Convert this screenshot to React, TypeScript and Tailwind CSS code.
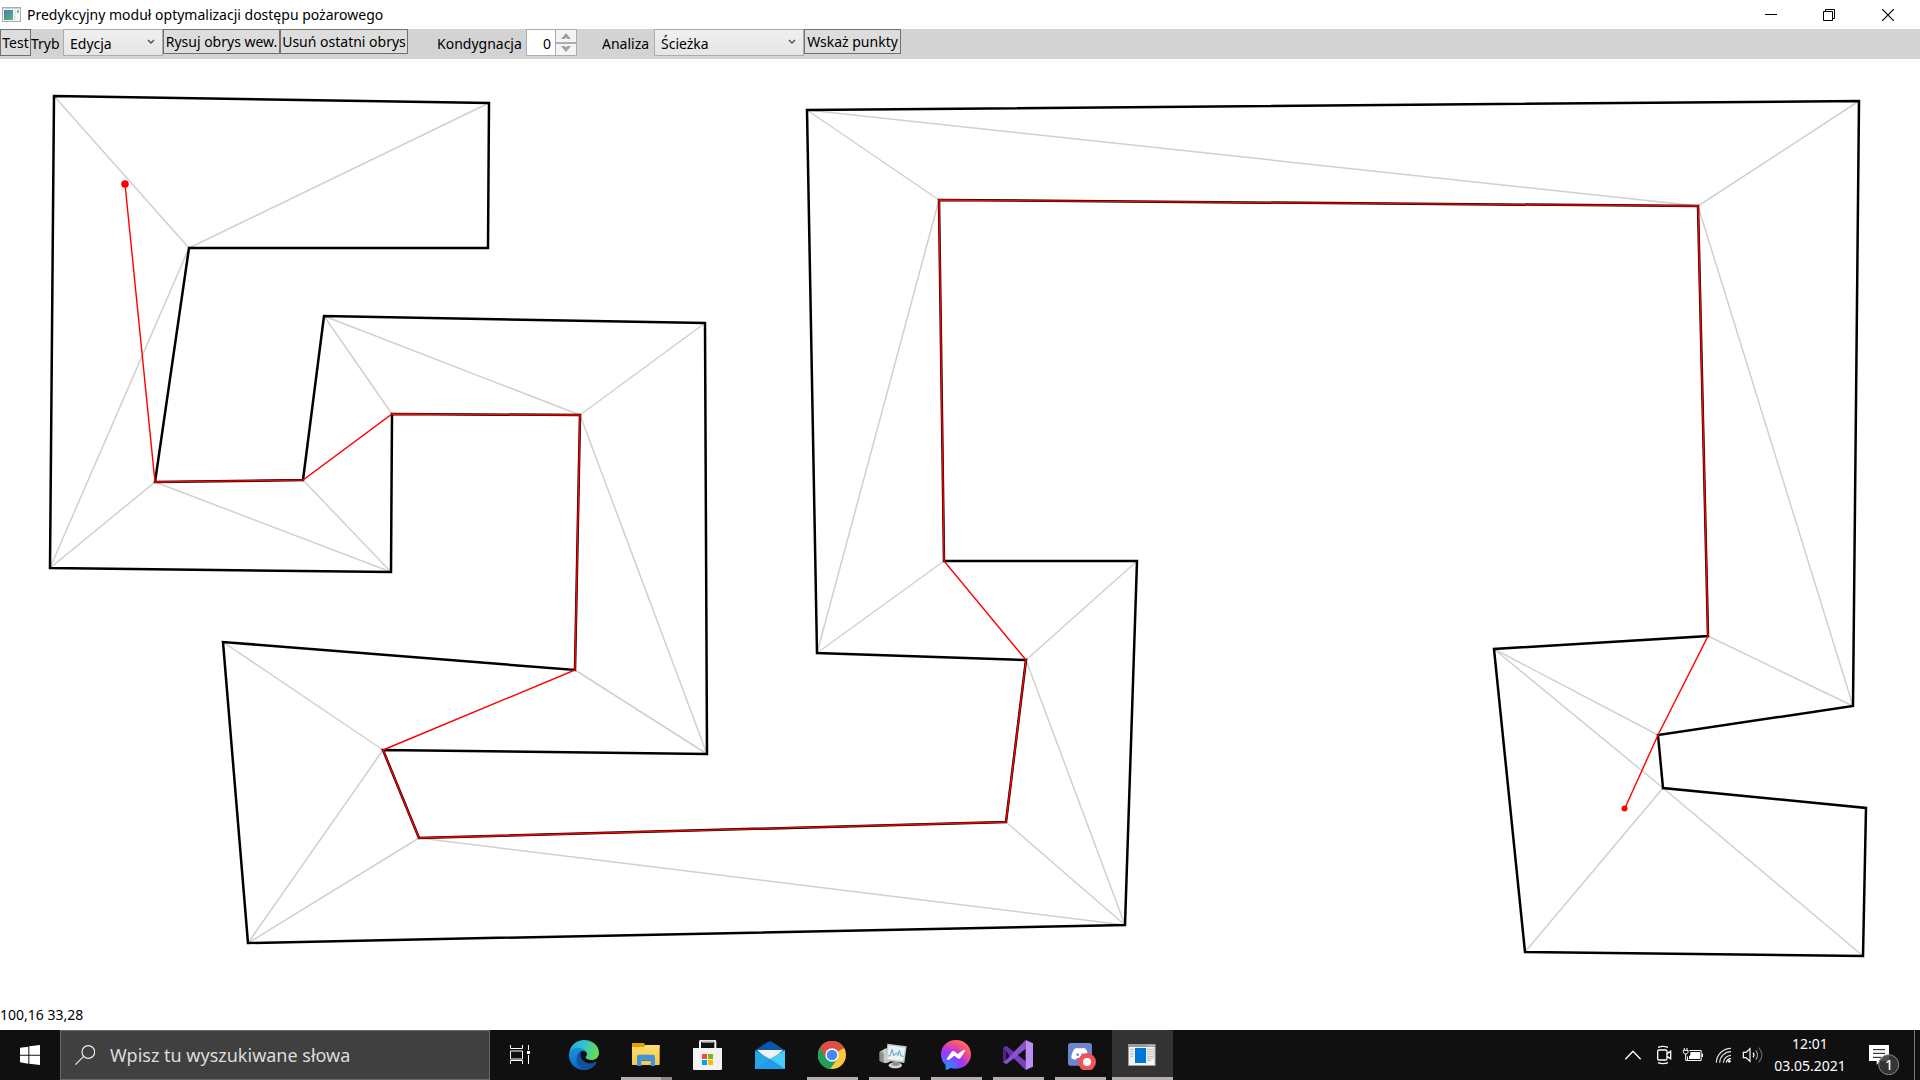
import React, { useState } from "react";

type Point = [number, number];

const outline: Point[] = [
  [54, 96], [489, 103], [488, 248], [189, 248], [155, 482], [303, 480], [324, 316], [705, 323],
  [707, 754], [383, 750], [419, 838], [1006, 822], [1026, 660], [817, 653], [807, 110], [1859, 101],
  [1853, 706], [1658, 735], [1663, 788], [1866, 808], [1863, 956], [1525, 952], [1494, 649], [1708, 636],
  [1698, 206], [939, 200], [944, 561], [1137, 561], [1125, 925], [248, 943], [223, 642], [575, 670],
  [580, 415], [392, 414], [391, 572], [50, 568],
];

const diagonals: [Point, Point][] = [
  [[54, 96], [189, 248]], [[489, 103], [189, 248]], [[189, 248], [50, 568]], [[50, 568], [155, 482]],
  [[155, 482], [391, 572]], [[303, 480], [391, 572]], [[324, 316], [392, 414]], [[324, 316], [580, 415]],
  [[705, 323], [580, 415]], [[580, 415], [707, 754]], [[575, 670], [707, 754]], [[223, 642], [383, 750]],
  [[383, 750], [248, 943]], [[419, 838], [248, 943]], [[419, 838], [1125, 925]], [[1006, 822], [1125, 925]],
  [[1026, 660], [1125, 925]], [[1026, 660], [1137, 561]], [[944, 561], [817, 653]], [[939, 200], [817, 653]],
  [[807, 110], [939, 200]], [[807, 110], [1698, 206]], [[1859, 101], [1698, 206]], [[1698, 206], [1853, 706]],
  [[1708, 636], [1853, 706]], [[1494, 649], [1658, 735]], [[1494, 649], [1663, 788]], [[1525, 952], [1663, 788]],
  [[1663, 788], [1863, 956]],
];

const route: Point[] = [
  [125, 184], [155, 482], [303, 480], [392, 414], [580, 415], [575, 670], [383, 750], [419, 838],
  [1006, 822], [1026, 660], [944, 561], [939, 200], [1698, 206], [1708, 636], [1658, 735], [1625, 808],
];

const toPoints = (list: Point[]) => list.map((p) => p.join(",")).join(" ");

function TitleBar() {
  return (
    <header className="flex h-[29px] shrink-0 items-center bg-white">
      <svg className="ml-0.5 mr-1.5 h-4 w-[19px]" viewBox="0 0 19 16" aria-hidden="true">
        <defs>
          <linearGradient id="appIcon" x1="0" y1="0" x2="1" y2="1">
            <stop offset="0" stopColor="#3f7fb0" />
            <stop offset="1" stopColor="#5fb573" />
          </linearGradient>
        </defs>
        <rect x="0.5" y="0.5" width="18" height="14" fill="#f4f6f7" stroke="#a9adb0" />
        <rect x="1" y="1" width="17" height="1" fill="#ccd2d6" />
        <rect x="2" y="3" width="9" height="10" fill="url(#appIcon)" />
        <rect x="12" y="3" width="2" height="10" fill="#dfe9f0" />
        <rect x="15" y="3" width="2" height="3" fill="#7fc0a0" />
      </svg>
      <h1 className="grow whitespace-nowrap text-[14px] leading-5">Predykcyjny moduł optymalizacji dostępu pożarowego</h1>
      <div className="flex h-full pr-0.5">
        <button aria-label="Minimalizuj" className="flex w-[58px] items-center justify-center">
          <svg className="size-3" viewBox="0 0 12 12"><rect y="5" width="12" height="1" fill="#000" /></svg>
        </button>
        <button aria-label="Przywróć w dół" className="flex w-[58px] items-center justify-center">
          <svg className="size-3" viewBox="0 0 12 12" fill="none" stroke="#000">
            <path d="M.5 2.5h9v9h-9zM2.5 2.5v-2h9v9h-2" />
          </svg>
        </button>
        <button aria-label="Zamknij" className="flex w-[60px] items-center justify-center">
          <svg className="size-3" viewBox="0 0 12 12" stroke="#000" strokeWidth="1.2"><path d="M0 0l12 12M12 0L0 12" /></svg>
        </button>
      </div>
    </header>
  );
}

function Combo({ id, label, options, width }: { id: string; label: string; options: string[]; width: string }) {
  return (
    <>
      <label htmlFor={id} className="leading-[30px]">{label}</label>
      <div className={`relative h-[27px] shrink-0 ${width}`}>
        <select
          id={id}
          className="size-full appearance-none rounded-none border border-[#acacac] bg-linear-to-b from-[#f0f0f0] to-[#e5e5e5] pl-1.5 pt-0.5 leading-5 outline-none"
        >
          {options.map((o) => <option key={o}>{o}</option>)}
        </select>
        <svg className="pointer-events-none absolute right-2 top-2.5 h-[6px] w-[8px]" viewBox="0 0 8 6" fill="none" stroke="#555" strokeWidth="1.5">
          <path d="M1 1l3 3 3-3" />
        </svg>
      </div>
    </>
  );
}

function ToolButton({ children, size }: { children: React.ReactNode; size: string }) {
  return (
    <button className={`flex items-center justify-center whitespace-nowrap border border-[#707070] bg-[#dddddd] pt-px ${size}`}>
      {children}
    </button>
  );
}

function Toolbar() {
  const [floor, setFloor] = useState(0);
  return (
    <div role="toolbar" className="flex h-[30px] shrink-0 items-start bg-[#d3d3d3] text-[14px] leading-5">
      <ToolButton size="h-[27px] w-[31px]">Test</ToolButton>
      <div className="flex w-[132px] justify-between">
        <Combo id="mode" label="Tryb" options={["Edycja"]} width="w-[100px]" />
      </div>
      <ToolButton size="h-[25px] w-[117px]">Rysuj obrys wew.</ToolButton>
      <ToolButton size="h-[25px] w-[128px]">Usuń ostatni obrys</ToolButton>
      <div className="ml-[29px] flex w-[140px] justify-between">
        <label htmlFor="floor" className="leading-[30px]">Kondygnacja</label>
        <div className="flex h-[27px] w-[51px] border border-[#abadb3] bg-[#abadb3]">
          <input
            id="floor"
            className="w-7 min-w-0 bg-white pr-1 pt-0.5 text-right outline-none"
            value={floor}
            onChange={(e) => setFloor(Number(e.target.value) || 0)}
          />
          <div className="ml-px flex grow flex-col gap-0.5">
            <button aria-label="W górę" onClick={() => setFloor(floor + 1)} className="flex grow items-center justify-center bg-[#f4f4f4]">
              <svg className="h-[6px] w-2.5" viewBox="0 0 10 6"><path d="M0 6L5 0l5 6H6.500L5 4.500 3.500 6z" fill="#a0a0a0" /></svg>
            </button>
            <button aria-label="W dół" onClick={() => setFloor(floor - 1)} className="flex grow items-center justify-center bg-[#f4f4f4]">
              <svg className="h-[6px] w-2.5" viewBox="0 0 10 6"><path d="M0 0l5 6 5-6H6.500L5 1.500 3.500 0z" fill="#a0a0a0" /></svg>
            </button>
          </div>
        </div>
      </div>
      <div className="ml-[25px] flex w-[202px] justify-between">
        <Combo id="analysis" label="Analiza" options={["Ścieżka"]} width="w-[150px]" />
      </div>
      <ToolButton size="h-[25px] w-[97px]">Wskaż punkty</ToolButton>
    </div>
  );
}

function Plan() {
  return (
    <main className="min-h-0 grow bg-white">
      <svg className="block size-full" viewBox="0 59 1920 946" role="img" aria-label="Rzut kondygnacji">
        <g stroke="#d0d0d0" strokeWidth="1.5">
          {diagonals.map(([a, b], i) => <line key={i} x1={a[0]} y1={a[1]} x2={b[0]} y2={b[1]} />)}
        </g>
        <polygon points={toPoints(outline)} fill="none" stroke="#000" strokeWidth="2.5" />
        <polyline points={toPoints(route)} fill="none" stroke="#f00" strokeWidth="1.4" />
        <circle cx="125" cy="184" r="3.8" fill="#f00" />
        <circle cx="1624.5" cy="808.5" r="3" fill="#f00" />
      </svg>
    </main>
  );
}

const icon = "h-[30px] w-[31px]";

const EdgeIcon = () => (
  <svg className={icon} viewBox="237 60 93 90">
    <defs>
      <linearGradient id="edgeTop" x1="0" y1="0.3" x2="1" y2="0.5">
        <stop offset="0" stopColor="#2aa6e0" /><stop offset="0.5" stopColor="#35c6c8" /><stop offset="1" stopColor="#6bdc48" />
      </linearGradient>
      <linearGradient id="edgeLeft" x1="0" y1="0" x2="0.4" y2="1">
        <stop offset="0" stopColor="#1a98e0" /><stop offset="1" stopColor="#0b62c4" />
      </linearGradient>
    </defs>
    <path d="M238 97c4-22 21-37 44-37 26 0 45 18 45 38 0 14-10 22-23 22-11 0-17-4-17-8 0-3 4-4 4-10 0-8-8-13-19-13-15 0-28 5-34 8z" fill="url(#edgeTop)" />
    <path d="M237 106c0-14 11-23 25-23 17 0 29 10 29 18-2-5-7-8-12-8-8 0-14 7-14 17 0 16 12 27 26 27 12 0 20-5 26-10-7 15-20 23-35 23-26 0-45-19-45-44z" fill="url(#edgeLeft)" />
    <path d="M273 94c-8 5-14 14-13 25 1 17 13 28 27 31 14-1 25-9 32-20 2-4 0-5-3-4-6 3-10 4-15 4-16 0-29-11-29-25 0-4 1-8 1-11z" fill="#11519f" />
  </svg>
);

const ExplorerIcon = () => (
  <svg className={icon} viewBox="423 60 93 90">
    <defs>
      <linearGradient id="folder" x1="0" y1="0" x2="0" y2="1"><stop offset="0" stopColor="#ffdc73" /><stop offset="1" stopColor="#fbc93f" /></linearGradient>
    </defs>
    <path d="M426 71q0-2 2-2h33l6 7h40q2 0 2 2v8h-83z" fill="#e2a000" />
    <path d="M426 81h36l5-6h42v58q0 2-2 2h-79q-2 0-2-2z" fill="url(#folder)" />
    <path d="M441 138v-28q0-6 6-6h42q6 0 6 6v28h-13v-19h-28v19z" fill="#3d95dc" />
    <rect x="454" y="119" width="28" height="4" fill="#2f7fc2" />
  </svg>
);

const StoreIcon = () => (
  <svg className={icon} viewBox="609 60 93 90">
    <path d="M630 86V66q0-4 4-4h38q4 0 4 4v20" fill="none" stroke="#f2f2f2" strokeWidth="6" />
    <rect x="636" y="62" width="34" height="6" fill="#c2bfbf" />
    <path d="M609 84h87v62q0 4-4 4h-79q-4 0-4-4z" fill="#f3f2f2" />
    <rect x="636" y="102" width="15" height="15" fill="#f04e24" /><rect x="654" y="102" width="15" height="15" fill="#7db900" />
    <rect x="636" y="120" width="15" height="15" fill="#00a3ee" /><rect x="654" y="120" width="15" height="15" fill="#ffb800" />
  </svg>
);

const MailIcon = () => (
  <svg className={icon} viewBox="795 60 93 90">
    <path d="M795 91l40-26q5-3 10 0l40 26-45 28z" fill="#0a57a8" />
    <path d="M801 90h78l-39 36z" fill="#f1f1f1" />
    <path d="M795 91l45 26 45-26v56h-90z" fill="#2aa5ea" />
    <path d="M885 91l-45 26 45 30z" fill="#45cdf7" />
    <path d="M840 117l45 30h-90z" fill="#229bea" />
  </svg>
);

const ChromeIcon = () => (
  <svg className={icon} viewBox="981 60 93 90">
    <circle cx="1026" cy="105" r="42" fill="#fbc93d" />
    <path d="M1026 105L990 83a42 42 0 0 1 72 1z" fill="#d94f41" />
    <path d="M990 83a42 42 0 0 0 31 64l22-32-17-10z" fill="#1e9f5c" />
    <path d="M1026 84h36a42 42 0 0 0-72-1l17 30z" fill="#d94f41" />
    <circle cx="1026" cy="105" r="20" fill="#fff" />
    <circle cx="1026" cy="105" r="16" fill="#4688f4" />
  </svg>
);

const TaskManagerIcon = () => (
  <svg className={icon} viewBox="117 60 93 90">
    <path d="M119 95l18-10 12 3v38l-12 4-18-8z" fill="#c9c9c9" />
    <path d="M119 95l12 3v32l-12-8z" fill="#8f8f8f" />
    <rect x="121" y="95" width="5" height="5" fill="#48d13c" />
    <ellipse cx="166" cy="136" rx="20" ry="9" fill="#d5d5d5" />
    <ellipse cx="167" cy="133" rx="12" ry="5" fill="#909090" />
    <path d="M142 71l58 8-7 50-55-7z" fill="#c6c6c6" />
    <path d="M146 76l49 7-6 40-47-6z" fill="#e8f3f9" />
    <path d="M144 108l7-1 5-19 6 20 7-10 5 9 4-16 5 17 8 1" fill="none" stroke="#5aa6c8" strokeWidth="3" />
  </svg>
);

const MessengerIcon = () => (
  <svg className={icon} viewBox="303 60 93 90">
    <defs>
      <radialGradient id="messenger" cx="0.15" cy="1" r="1.1">
        <stop offset="0" stopColor="#109cff" /><stop offset="0.55" stopColor="#a033ff" /><stop offset="0.85" stopColor="#fb5278" /><stop offset="1" stopColor="#ff6b68" />
      </radialGradient>
    </defs>
    <path d="M348 60c-26 0-45 19-45 43 0 13 5 24 14 32v12q0 4 4 2l12-5c5 1 10 2 15 2 26 0 45-19 45-43s-19-43-45-43z" fill="url(#messenger)" />
    <path d="M320 117l14-21q4-5 9-2l10 8 16-11q5-2 7 1l-14 21q-4 5-9 2l-10-8-16 12q-5 2-7-2z" fill="#fff" />
  </svg>
);

const VisualStudioIcon = () => (
  <svg className={icon} viewBox="489 60 93 90">
    <path d="M489 84l10-6 58 46v26z" fill="#7b3fc0" />
    <path d="M489 84v42l10-7V89l-4-9z" fill="#52218c" />
    <path d="M489 126l10 7 58-47V60l-58 59z" fill="#8a52d0" />
    <path d="M557 60l22 10v70l-22 10z" fill="#bd8df6" />
    <path d="M489 84l10-6 22 20-12 12-10-21z" fill="#6a31ac" />
  </svg>
);

const DiscordIcon = () => (
  <svg className={icon} viewBox="675 60 93 90">
    <rect x="684" y="69" width="72" height="68" rx="8" fill="#6d85cb" />
    <path d="M704 86c5-2 9-3 10-1h12c2-2 7-1 11 1 5 7 8 18 8 28-4 4-9 5-12 5l-4-5h-18l-4 5c-4 0-9-2-13-5 0-10 4-21 10-28z" fill="#fff" />
    <circle cx="713" cy="104" r="4" fill="#6d85cb" /><circle cx="728" cy="104" r="4" fill="#6d85cb" />
    <circle cx="741" cy="126" r="27" fill="#f05454" />
    <circle cx="741" cy="126" r="12" fill="#fff" />
  </svg>
);

const AppWindowIcon = () => (
  <svg className={icon} viewBox="861 60 93 90">
    <rect x="864" y="72" width="83" height="66" fill="#9a9a9a" />
    <rect x="867" y="81" width="77" height="54" fill="#f4f4f4" />
    <path d="M926 77h4M933 77h4M940 77h4" stroke="#ddd" strokeWidth="3" />
    <rect x="885" y="84" width="33" height="45" fill="#0078d7" />
    <path d="M870 88h12M870 95h9M870 102h12M870 109h9M921 88h21M921 95h21M921 102h21M921 109h21M921 115h18M921 121h12" stroke="#b0b0b0" strokeWidth="2.5" />
  </svg>
);

const apps = [
  { name: "Microsoft Edge", Icon: EdgeIcon, state: "idle" },
  { name: "Eksplorator plików", Icon: ExplorerIcon, state: "stacked" },
  { name: "Microsoft Store", Icon: StoreIcon, state: "idle" },
  { name: "Poczta", Icon: MailIcon, state: "idle" },
  { name: "Google Chrome", Icon: ChromeIcon, state: "open" },
  { name: "Menedżer zadań", Icon: TaskManagerIcon, state: "open" },
  { name: "Messenger", Icon: MessengerIcon, state: "open" },
  { name: "Visual Studio", Icon: VisualStudioIcon, state: "open" },
  { name: "Discord", Icon: DiscordIcon, state: "open" },
  { name: "Moduł dostępu pożarowego", Icon: AppWindowIcon, state: "active" },
];

const trayIcon = "size-[30px]";

function Tray() {
  return (
    <div className="flex h-full items-center text-white">
      <button aria-label="Pokaż ukryte ikony">
        <svg className={trayIcon} viewBox="54 60 90 90" fill="none" stroke="#fff" strokeWidth="4"><path d="M76 118l23-24 23 24" /></svg>
      </button>
      <button aria-label="Kamera">
        <svg className={trayIcon} viewBox="144 60 90 90" fill="none" stroke="#fff" strokeWidth="4">
          <rect x="173" y="90" width="28" height="30" rx="4" />
          <path d="M201 101l11-7v22l-11-7M174 82q15-6 30 0M174 128q15 6 30 0" />
        </svg>
      </button>
      <button aria-label="Bateria">
        <svg className={trayIcon} viewBox="234 60 90 90">
          <path d="M268 91.500h35.500v30h-41v-12" fill="none" stroke="#fff" strokeWidth="3" />
          <path d="M271 96h29v21h-33v-8l4-4z" fill="#fff" />
          <rect x="305" y="101" width="4" height="10" fill="#fff" />
          <path d="M253 84v6M261 84v6M250 91h14v6l-4 5h-6l-4-5zM257 102v19h6" fill="none" stroke="#fff" strokeWidth="3" />
        </svg>
      </button>
      <button aria-label="Sieć">
        <svg className={trayIcon} viewBox="324 60 90 90" fill="none" stroke="#fff" strokeWidth="3.5">
          <path d="M349 128a44 44 0 0 1 44-43M359 128a34 34 0 0 1 34-33M370 128a24 24 0 0 1 23-22" stroke="#ddd" />
          <path d="M379 128a13 13 0 0 1 14-12" /><circle cx="388" cy="124" r="4" fill="#fff" stroke="none" />
        </svg>
      </button>
      <button aria-label="Głośność">
        <svg className={trayIcon} viewBox="414 60 90 90" fill="none" stroke="#fff" strokeWidth="3.5">
          <path d="M430 97h8l12-11v38l-12-11h-8z" />
          <path d="M459 98q6 7 0 14" />
          <path d="M467 91q11 14 0 28" stroke="#999" /><path d="M476 83q20 22 0 44" stroke="#666" />
        </svg>
      </button>
      <button className="w-[84px] text-center text-[14px] leading-[22px]">
        <span className="block">12:01</span>
        <span className="block">03.05.2021</span>
      </button>
      <button aria-label="Powiadomienia" className="relative">
        <svg className="h-10 w-[62px]" viewBox="756 45 186 120">
          <path d="M807 75h60v48h-27l-10 12v-12h-23z" fill="#fff" />
          <path d="M819 89h36M819 100h36M819 112h24" stroke="#101010" strokeWidth="3" />
          <circle cx="866" cy="134" r="30" fill="#3a3a3a" fillOpacity="0.88" stroke="#8a8a8a" strokeWidth="3" />
        </svg>
        <span className="absolute bottom-0 left-[27px] w-5 text-center text-[14px] font-medium leading-5">1</span>
      </button>
      <div className="mr-[5px] h-full w-px bg-[#7a7a7a]" />
    </div>
  );
}

function Taskbar() {
  return (
    <footer className="flex h-[50px] shrink-0 items-center bg-[#101010]">
      <button aria-label="Start" className="flex h-full w-[60px] items-center justify-center">
        <svg className="size-5" viewBox="0 0 60 60" fill="#fff">
          <path d="M0 8l25-3v24H0zM28 4l32-4v29H28zM0 32h25v24L0 52zM28 32h32v28l-32-4z" />
        </svg>
      </button>
      <label htmlFor="search" className="flex h-full w-[430px] items-center border border-[#686868] bg-[#404040]">
        <svg className="ml-3.5 mr-[15px] size-5" viewBox="0 0 60 60" fill="none" stroke="#eee" strokeWidth="3.5">
          <circle cx="40" cy="21" r="19" /><path d="M26 34L1 59" />
        </svg>
        <input
          id="search"
          aria-label="Wyszukaj"
          placeholder="Wpisz tu wyszukiwane słowa"
          className="min-w-0 grow bg-transparent text-[18px] leading-6 outline-none placeholder:text-[#dcdcdc]"
        />
      </label>
      <button aria-label="Widok zadań" className="mr-1 flex h-full w-[60px] items-center justify-center">
        <svg className="size-5" viewBox="60 75 60 60" fill="none" stroke="#fff" strokeWidth="3">
          <path d="M61.500 75v10.500h36V75M61.500 93h36v24h-36zM61.500 132v-10.500h36V132M115.500 75v15M115.500 105v27" />
          <rect x="111" y="93" width="9" height="9" fill="#fff" stroke="none" />
        </svg>
      </button>
      <nav className="flex h-full grow gap-px">
        {apps.map(({ name, Icon, state }) => (
          <button
            key={name}
            aria-label={name}
            className={`relative flex w-[61px] items-center justify-center ${state === "active" ? "bg-[#333333]" : ""}`}
          >
            <Icon />
            {state === "active" && <span className="absolute inset-x-0 bottom-0 h-[3px] bg-[#b5b0b0]" />}
            {state === "open" && <span className="absolute inset-x-[5px] bottom-0 h-[3px] bg-[#b5b0b0]" />}
            {state === "stacked" && (
              <span className="absolute inset-x-[5px] bottom-0 h-[3px] border-r-[11px] border-[#8b8689] bg-[#b5b0b0]" />
            )}
          </button>
        ))}
      </nav>
      <Tray />
    </footer>
  );
}

export default function App() {
  return (
    <div className="flex h-screen flex-col overflow-hidden bg-white font-['Noto_Sans','Open_Sans',sans-serif] text-black">
      <TitleBar />
      <Toolbar />
      <Plan />
      <p className="h-[25px] shrink-0 text-[14px] leading-5">100,16 33,28</p>
      <Taskbar />
    </div>
  );
}
